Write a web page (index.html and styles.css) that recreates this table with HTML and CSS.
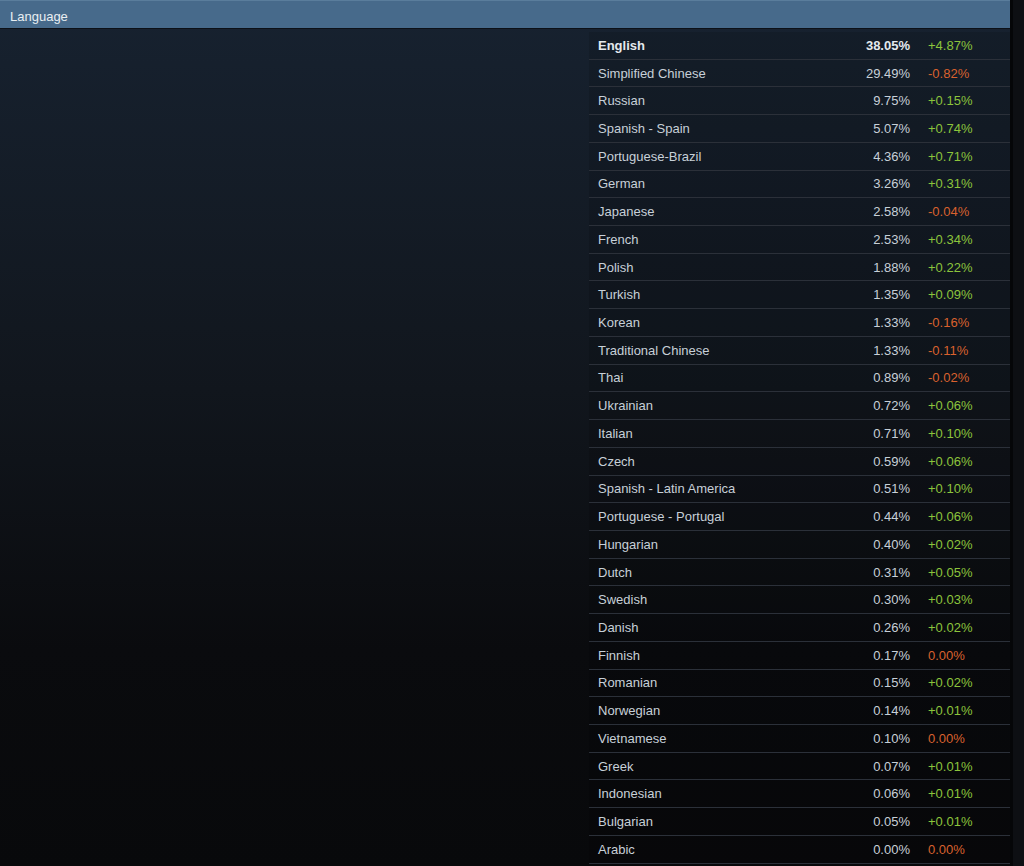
FILE: index.html
```html
<!DOCTYPE html>
<html lang="en">

<head>
	<meta charset="UTF-8">
	<meta name="viewport" content="width=device-width, initial-scale=1.0">
	<title>Language</title>
	<link rel="stylesheet" href="styles.css">
</head>

<body>
	<div class="page">
		<div class="panel">
			<div class="panel-title">Language</div>
			<div class="panel-body">
				<div class="spacer"></div>
				<div class="lang-table" id="lang-table">
					<div class="row top"><span class="name">English</span><span class="pct">38.05%</span><span class="chg up">+4.87%</span></div>
					<div class="row"><span class="name">Simplified Chinese</span><span class="pct">29.49%</span><span class="chg down">-0.82%</span></div>
					<div class="row"><span class="name">Russian</span><span class="pct">9.75%</span><span class="chg up">+0.15%</span></div>
					<div class="row"><span class="name">Spanish - Spain</span><span class="pct">5.07%</span><span class="chg up">+0.74%</span></div>
					<div class="row"><span class="name">Portuguese-Brazil</span><span class="pct">4.36%</span><span class="chg up">+0.71%</span></div>
					<div class="row"><span class="name">German</span><span class="pct">3.26%</span><span class="chg up">+0.31%</span></div>
					<div class="row"><span class="name">Japanese</span><span class="pct">2.58%</span><span class="chg down">-0.04%</span></div>
					<div class="row"><span class="name">French</span><span class="pct">2.53%</span><span class="chg up">+0.34%</span></div>
					<div class="row"><span class="name">Polish</span><span class="pct">1.88%</span><span class="chg up">+0.22%</span></div>
					<div class="row"><span class="name">Turkish</span><span class="pct">1.35%</span><span class="chg up">+0.09%</span></div>
					<div class="row"><span class="name">Korean</span><span class="pct">1.33%</span><span class="chg down">-0.16%</span></div>
					<div class="row"><span class="name">Traditional Chinese</span><span class="pct">1.33%</span><span class="chg down">-0.11%</span></div>
					<div class="row"><span class="name">Thai</span><span class="pct">0.89%</span><span class="chg down">-0.02%</span></div>
					<div class="row"><span class="name">Ukrainian</span><span class="pct">0.72%</span><span class="chg up">+0.06%</span></div>
					<div class="row"><span class="name">Italian</span><span class="pct">0.71%</span><span class="chg up">+0.10%</span></div>
					<div class="row"><span class="name">Czech</span><span class="pct">0.59%</span><span class="chg up">+0.06%</span></div>
					<div class="row"><span class="name">Spanish - Latin America</span><span class="pct">0.51%</span><span class="chg up">+0.10%</span></div>
					<div class="row"><span class="name">Portuguese - Portugal</span><span class="pct">0.44%</span><span class="chg up">+0.06%</span></div>
					<div class="row"><span class="name">Hungarian</span><span class="pct">0.40%</span><span class="chg up">+0.02%</span></div>
					<div class="row"><span class="name">Dutch</span><span class="pct">0.31%</span><span class="chg up">+0.05%</span></div>
					<div class="row"><span class="name">Swedish</span><span class="pct">0.30%</span><span class="chg up">+0.03%</span></div>
					<div class="row"><span class="name">Danish</span><span class="pct">0.26%</span><span class="chg up">+0.02%</span></div>
					<div class="row"><span class="name">Finnish</span><span class="pct">0.17%</span><span class="chg down">0.00%</span></div>
					<div class="row"><span class="name">Romanian</span><span class="pct">0.15%</span><span class="chg up">+0.02%</span></div>
					<div class="row"><span class="name">Norwegian</span><span class="pct">0.14%</span><span class="chg up">+0.01%</span></div>
					<div class="row"><span class="name">Vietnamese</span><span class="pct">0.10%</span><span class="chg down">0.00%</span></div>
					<div class="row"><span class="name">Greek</span><span class="pct">0.07%</span><span class="chg up">+0.01%</span></div>
					<div class="row"><span class="name">Indonesian</span><span class="pct">0.06%</span><span class="chg up">+0.01%</span></div>
					<div class="row"><span class="name">Bulgarian</span><span class="pct">0.05%</span><span class="chg up">+0.01%</span></div>
					<div class="row"><span class="name">Arabic</span><span class="pct">0.00%</span><span class="chg down">0.00%</span></div>
				</div>
			</div>
		</div>
		<div class="edge"></div>
	</div>
</body>

</html>
```

FILE: styles.css
```css
html,
body {
	margin: 0;
	height: 100%;
}

body {
	background: #0b0c0f;
	font-family: "Liberation Sans", Arial, sans-serif;
	font-size: 13px;
	color: #c7d0d8;
	overflow: hidden;
}

.page {
	display: flex;
	height: 866px;
}

.panel {
	width: 1010px;
	display: flex;
	flex-direction: column;
	background: linear-gradient(to bottom, #172230 0%, #11161d 45%, #0a0b0e 75%, #08090b 100%);
}

.panel-title {
	height: 29px;
	line-height: 31px;
	padding-left: 10px;
	box-sizing: border-box;
	background: #476a8b;
	border-top: 1px solid #5a7d9c;
	border-bottom: 1px solid #0d1118;
	color: #e9eef2;
	font-size: 13px;
}

.panel-body {
	display: flex;
	padding-top: 3px;
}

.spacer {
	width: 589px;
	flex: none;
}

.lang-table {
	flex: 1;
	background: rgba(0, 0, 0, 0.12);
}

.row {
	display: grid;
	grid-template-columns: 1fr auto 82px;
	align-items: center;
	height: 27.72px;
	box-sizing: border-box;
	padding-left: 9px;
	border-bottom: 1px solid #2b3039;
}

.row.top .name,
.row.top .pct {
	font-weight: bold;
	color: #e4e9ee;
}

.pct {
	text-align: right;
	padding-right: 18px;
}

.chg.up {
	color: #8cc43c;
}

.chg.down {
	color: #d9612e;
}

.edge {
	flex: 1;
	background: #0d0f13;
	border-left: 3px solid #050608;
}
```
